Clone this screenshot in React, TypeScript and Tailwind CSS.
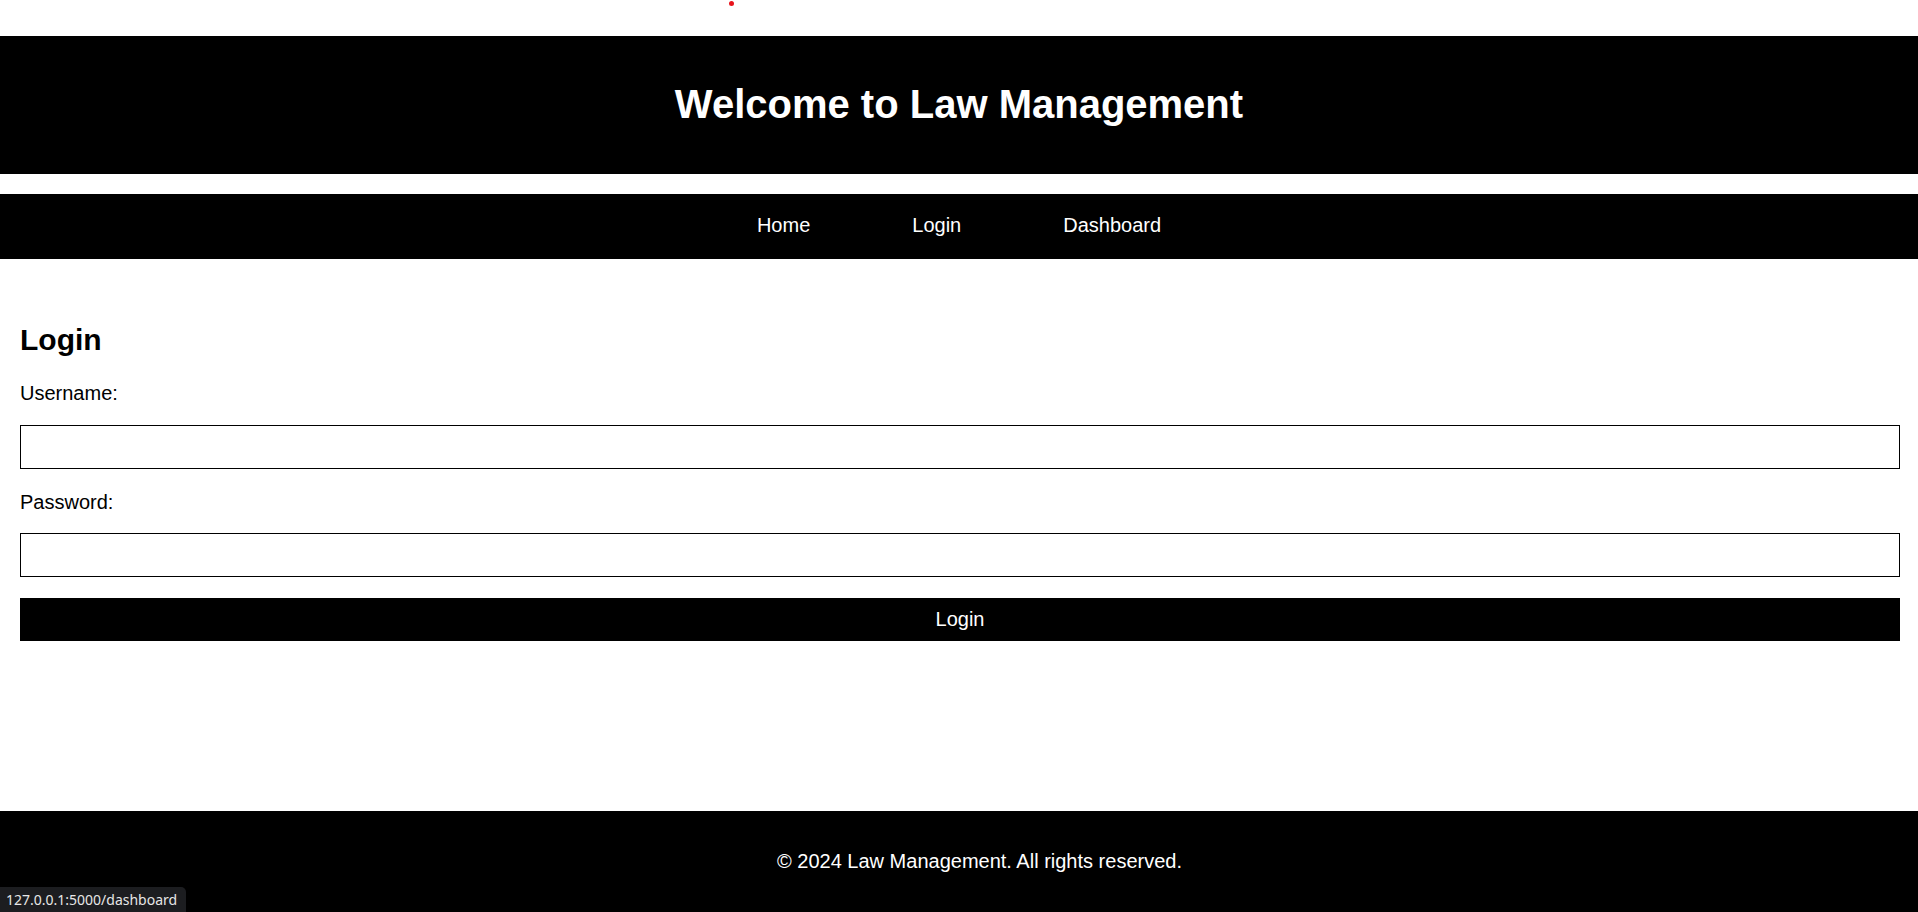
import React from "react";

export default function App() {
  const font = { fontFamily: '"Liberation Sans", Arial, sans-serif' };
  return (
    <div className="relative w-[1918px] h-[912px] overflow-hidden bg-white text-black font-['Liberation_Sans',Arial,sans-serif]">
      <div className="absolute left-[729px] top-[1px] w-[5px] h-[5px] rounded-full bg-[#e8141c]" />
      <div className="h-[36px]" />
      <header className="h-[138px] bg-black flex items-center justify-center pb-[2px]">
        <h1 className="text-[40px] font-bold text-white leading-[46px]">Welcome to Law Management</h1>
      </header>
      <div className="h-[20px]" />
      <nav className="h-[65px] bg-black flex items-center justify-center gap-[102px] pb-[2px]">
        <a className="text-[20px] text-white leading-[23px]" href="#">Home</a>
        <a className="text-[20px] text-white leading-[23px]" href="#">Login</a>
        <a className="text-[20px] text-white leading-[23px]" href="#">Dashboard</a>
      </nav>
      <main className="pl-[20px] pr-[18px] pt-[64px]">
        <h2 className="text-[30px] font-bold leading-[34px]">Login</h2>
        <form className="flex flex-col" onSubmit={(e) => e.preventDefault()}>
          <label className="mt-[25px] text-[20px] leading-[23px]">Username:</label>
          <input type="text" className="mt-[20px] h-[44px] w-full border border-black bg-white outline-none" />
          <label className="mt-[22px] text-[20px] leading-[23px]">Password:</label>
          <input type="password" className="mt-[19px] h-[44px] w-full border border-black bg-white outline-none" />
          <button type="submit" className="mt-[21px] h-[43px] w-full bg-black text-white text-[20px] leading-[23px] flex items-center justify-center">Login</button>
        </form>
      </main>
      <footer className="absolute left-0 right-0 top-[811px] h-[101px] bg-black flex items-center justify-center pl-[41px]">
        <p className="text-[20px] text-white leading-[23px]" style={font}>© 2024 Law Management. All rights reserved.</p>
      </footer>
      <div className="absolute left-0 bottom-0 w-[186px] h-[25px] bg-[#1c1d20] rounded-tr-[5px] flex items-center pl-[6px]">
        <span className="text-[14px] text-[#e6e6e6] leading-[16px] font-['Noto_Sans',sans-serif]">127.0.0.1:5000/dashboard</span>
      </div>
    </div>
  );
}
